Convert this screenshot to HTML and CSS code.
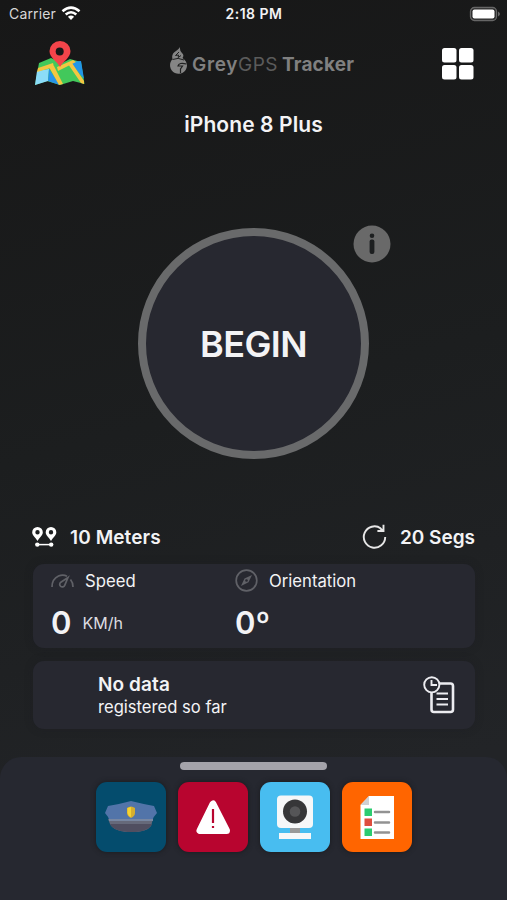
FILE: index.html
```html
<!DOCTYPE html>
<html lang="en">
<head>
<meta charset="utf-8">
<title>GreyGPS Tracker</title>
<link rel="stylesheet" href="styles.css">
</head>
<body>
<main class="screen">
  <div class="status">
    <div class="carrier"><span>Carrier</span>
      <svg width="20" height="15" viewBox="0 0 20 15" fill="none" stroke="#fff" stroke-width="2.6"><path d="M1.500 5.200Q10-2 18.500 5.200M4.700 8.500Q10 4 15.300 8.500"/><path d="M6.900 10.800Q10 8.300 13.100 10.800L10 14Z" fill="#fff" stroke="none"/></svg>
    </div>
    <time>2:18 PM</time>
    <svg class="battery" width="32" height="16" viewBox="0 0 32 16"><rect x="1.500" y="1.500" width="26" height="13" rx="4" fill="#292929" stroke="#666" stroke-width="1.300"/><rect x="3.500" y="3.500" width="22" height="9" rx="2" fill="#fff"/><path d="M29 5.500Q33 8 29 10.500Z" fill="#666"/></svg>
  </div>
  <header class="header">
    <svg class="map" width="50" height="46" viewBox="0 0 50 46">
      <path d="M4 22L16 17L27 22L35 18L46 21L49.500 43L38 40L25 44L12 40L0 44Z" fill="#42c85b"/>
      <path d="M2 30L14 28L13 40L0 44Z" fill="#8bdcf8"/><path d="M14 28L25 44L13 40Z" fill="#2793e8"/>
      <path d="M35 21L46 20L49 38Z" fill="#2196e8"/>
      <path d="M3 27L18 22L19 26L2 31ZM14 26L19 25L28 43L24 44ZM22 26L38 19L41 21L23 30ZM33 23L37 22L49 40L49 43L46 42Z" fill="#f4c642"/>
      <path d="M25 26C22 20 14.500 17 14.500 10A10.500 10 0 0 1 35.500 10C35.500 17 28 20 25 26Z" fill="#f3444a"/><circle cx="24.700" cy="10.500" r="4" fill="#171819"/>
    </svg>
    <div class="brand">
      <svg width="18" height="28" viewBox="0 0 18 28"><path d="M10 0Q9.500 4 12 6Q14.500 8 12.500 11Q17 14 17 19A8.500 8.700 0 1 1 2.500 12Q1 7 6 4Q9 2 10 0Z" fill="#858585"/><path d="M9 5L5.500 8.500L8.500 8L8.200 10.500L11 8.500M2.500 12.500Q8 10 14 13" fill="none" stroke="#202121" stroke-width="1"/><path d="M16.500 17Q9 15 8 19H12.500L10.500 22V26" fill="none" stroke="#202121" stroke-width="1.200"/></svg>
      <span class="logo"><span class="grey">Grey</span><span class="gps">GPS</span><span class="tracker">Tracker</span></span>
    </div>
    <svg class="grid" width="32" height="32" viewBox="0 0 32 32" fill="#fff"><rect width="14.500" height="14.500" rx="2.500"/><rect x="17" width="14.500" height="14.500" rx="2.500"/><rect y="17" width="14.500" height="14.500" rx="2.500"/><rect x="17" y="17" width="14.500" height="14.500" rx="2.500"/></svg>
  </header>
  <h1 class="device">iPhone 8 Plus</h1>
  <div class="dial"><span>BEGIN</span>
    <svg class="info" width="38" height="38" viewBox="0 0 38 38"><circle cx="19" cy="19" r="18.500" fill="#696969"/><circle cx="19" cy="10.700" r="2.300" fill="#1d1f20"/><rect x="16.600" y="14.600" width="4.800" height="14.500" rx="2" fill="#1d1f20"/></svg>
  </div>
  <section class="limits">
    <div class="limit"><svg width="25" height="21" viewBox="0 0 25 21"><g fill="#fff" fill-rule="evenodd"><path id="pin" d="M5.500 0A5.300 5.300 0 0 1 10.800 5.500C10.800 8.500 7.500 10.500 5.500 14C3.500 10.500.2 8.500.2 5.500A5.300 5.300 0 0 1 5.500 0ZM5.500 3.100A2.200 2.200 0 1 0 5.500 7.500A2.200 2.200 0 0 0 5.500 3.100Z"/><use href="#pin" x="13.500"/></g><path d="M5 17.600H19.500" stroke="#fff" stroke-width="1.500"/><circle cx="5.300" cy="17.600" r="2.200" fill="#fff"/><circle cx="19.200" cy="17.600" r="2.200" fill="#fff"/></svg><span class="meters">10 Meters</span></div>
    <div class="limit right"><svg width="25" height="26" viewBox="0 0 25 26" fill="none" stroke="#e7e7e7" stroke-width="1.900"><path d="M18.800 4.400A10.700 10.700 0 1 0 23.200 13M21.500.7V7H15.400M20.800 6.700L18 4"/></svg><span class="segs">20 Segs</span></div>
  </section>
  <section class="metrics">
    <div class="metric"><div class="label"><svg width="23" height="16" viewBox="0 0 23 16" fill="none" stroke="#606167" stroke-width="1.700"><path d="M1 14Q1 6 7.500 3Q12 1 16 3.200M19.500 6.500Q22 9.500 22 14"/><path d="M17 4.500L13.700 12.300A2.600 2.600 0 1 1 9.800 9.200Z"/></svg><span class="speed">Speed</span></div><div class="value"><strong>0</strong><span class="unit">KM/h</span></div></div>
    <div class="metric"><div class="label"><svg width="23" height="23" viewBox="0 0 23 23"><circle cx="11.500" cy="11.500" r="10.300" fill="none" stroke="#606167" stroke-width="1.700"/><path d="M17 6L13.500 13.200L6 17L9.500 9.500Z" fill="#606167"/><circle cx="11.500" cy="11.500" r="1.300" fill="#272830"/></svg><span class="orientation">Orientation</span></div><div class="value"><strong>0º</strong></div></div>
  </section>
  <section class="record"><div><strong>No data</strong><span>registered so far</span></div>
    <svg width="33" height="40" viewBox="0 0 33 40" fill="none" stroke="#ececf0" stroke-width="2.600"><path d="M17 7.500H27.500Q30 7.500 30 10V33.500Q30 36 27.500 36H11Q8.500 36 8.500 33.500V17"/><circle cx="8.800" cy="8.800" r="7.600" stroke-width="1.900"/><path d="M8.500 4V9H14" stroke-width="1.900"/><path d="M13.500 17.500H25M13.500 23H25M13.500 28.500H25" stroke-width="1.900"/></svg>
  </section>
  <nav class="dock"><div class="handle"></div><div class="apps">
    <div class="app police"><svg width="70" height="70" viewBox="0 0 70 70"><path d="M9 31L12 24Q24 22 35 19Q47 22 58 24L61 31Q57 35 56 39Q52 49 36 50Q20 50 14 40Q13 35 9 31Z" fill="#5274a9"/><path d="M12 37H57L55 44Q51 50 36 50Q18 50 14 42Z" fill="#66697a"/><path d="M14 42H56Q52 50 36 50Q18 50 14 42Z" fill="#504e60"/><path d="M13 38H57" stroke="#7887a2" stroke-width="2"/><path d="M31 26Q35 23 39 26V31Q39 34 35 36Q31 34 31 31Z" fill="#d6ae2e"/><path d="M35 25V35Q32 34 31.500 31V26Z" fill="#f5d332"/></svg></div>
    <div class="app alert"><svg width="70" height="70" viewBox="0 0 70 70"><path d="M35 22L22 48.500H48.500Z" fill="#fff" stroke="#fff" stroke-width="7" stroke-linejoin="round"/><path d="M35 27V41M35 44V46" stroke="#b8052f" stroke-width="2.200"/></svg></div>
    <div class="app camera"><svg width="70" height="70" viewBox="0 0 70 70"><rect x="30" y="45" width="10" height="6" fill="#999"/><rect x="17" y="13.500" width="36" height="32.500" rx="4" fill="#f6f7f8"/><circle cx="35" cy="29.500" r="12" fill="#363638"/><circle cx="35" cy="29.500" r="5.300" fill="#555557"/><rect x="19" y="51" width="32" height="6" fill="#f6f7f8"/></svg></div>
    <div class="app report"><svg width="70" height="70" viewBox="0 0 70 70"><path d="M27 14H52V57H18.500V23Z" fill="#fff"/><path d="M27 14V23H18.500Z" fill="#d0d0d3"/><path d="M22.500 26.500H30V34H22.500ZM22.500 46.500H30V54H22.500Z" fill="#2dcc70"/><path d="M22.500 36.500H30V44H22.500Z" fill="#de4e3e"/><path d="M33 30H47M33 40.500H47M33 50.500H47" stroke="#929292" stroke-width="2.500" stroke-linecap="round"/></svg></div>
  </div></nav>
</main>
</body>
</html>
```
FILE: styles.css
```css
* { box-sizing: border-box; }
body { margin: 0; background: #191a1b; }
svg { display: block; flex: none; }
.screen { width: 507px; height: 900px; overflow: hidden; display: flex; flex-direction: column; background: linear-gradient(165deg, #171717 0%, #1c1e1f 45%, #222427 85%); color: #f3f3f5; font-family: Inter, "Liberation Sans", sans-serif; white-space: nowrap; }
.status { height: 28px; display: grid; grid-template-columns: 1fr auto 1fr; align-items: center; padding: 0 7px 1px 9px; font-size: 14px; }
.carrier { display: flex; gap: 5px; align-items: center; color: #d7d7d7; letter-spacing: .15px; }
.carrier svg { margin-top: -1px; }
.status time { font-weight: 600; font-size: 14px; letter-spacing: .5px; margin-left: -1px; }
.battery { justify-self: end; margin-right: -1px; }
.header { height: 72px; display: grid; grid-template-columns: 135px 1fr 80px; align-items: center; padding-left: 35px; }
.brand { display: flex; gap: 4px; align-items: center; margin-top: -7px; }
.logo { font-size: 19px; font-weight: 600; display: flex; margin-top: 8px; color: #808080; }
.grey { letter-spacing: .65px; }
.gps { font-weight: 400; color: #5b5b5b; letter-spacing: .5px; }
.tracker { margin-left: 4px; font-weight: 700; letter-spacing: .15px; }
.grid { justify-self: end; margin-right: 33px; }
.map { margin-top: -1px; }
.device { margin: 0; height: 49px; line-height: 50px; text-align: center; font-size: 21px; font-weight: 600; letter-spacing: .1px; }
.dial { width: 231px; height: 231px; flex: none; margin: 79px auto 0; border: 8px solid #696a6b; border-radius: 50%; background: #272830; display: grid; place-items: center; position: relative; }
.dial span { font-size: 36px; font-weight: 600; letter-spacing: -.6px; }
.info { position: absolute; left: 207px; top: -11.5px; }
.limits { height: 54px; margin: 51px 32px 0; display: flex; justify-content: space-between; align-items: center; font-size: 19px; font-weight: 600; }
.limit { display: flex; align-items: center; gap: 13px; }
.meters { letter-spacing: .1px; }
.metrics { height: 84px; flex: none; margin: 0 32px 0 33px; padding: 5px 18px; border-radius: 11px; background: #272830; display: grid; grid-template-columns: 184px 1fr; box-shadow: 0 0 8px #1b1c2044; }
.label { height: 23px; display: flex; align-items: center; gap: 11px; font-size: 16.7px; }
.value { height: 61px; display: flex; align-items: center; gap: 11px; font-size: 17px; }
.value strong { font-size: 31px; font-weight: 600; }
.unit { font-size: 16px; color: #dddde1; }
.record { height: 68px; flex: none; margin: 13px 32px 0 33px; padding: 1px 19px 0 65px; border-radius: 11px; background: #272830; display: flex; align-items: center; justify-content: space-between; font-size: 16.6px; line-height: 22px; box-shadow: 0 0 8px #1b1c2044; }
.record strong, .record span { display: block; }
.record strong { font-weight: 600; font-size: 19px; letter-spacing: .1px; }
.dock { height: 143px; flex: none; margin-top: 28px; padding-top: 5px; border-radius: 21px 21px 0 0; background: #262830; }
.handle { width: 147px; height: 8px; margin: 0 auto; border-radius: 4px; background: #a4a3aa; }
.apps { display: flex; justify-content: center; gap: 12px; margin-top: 12px; }
.app { width: 70px; height: 70px; border-radius: 11px; overflow: hidden; box-shadow: 0 0 5px #191a1e; }
.police { background: #044c6d; }
.alert { background: #b8052f; }
.camera { background: #48bdf0; }
.report { background: #ff6500; }
```
